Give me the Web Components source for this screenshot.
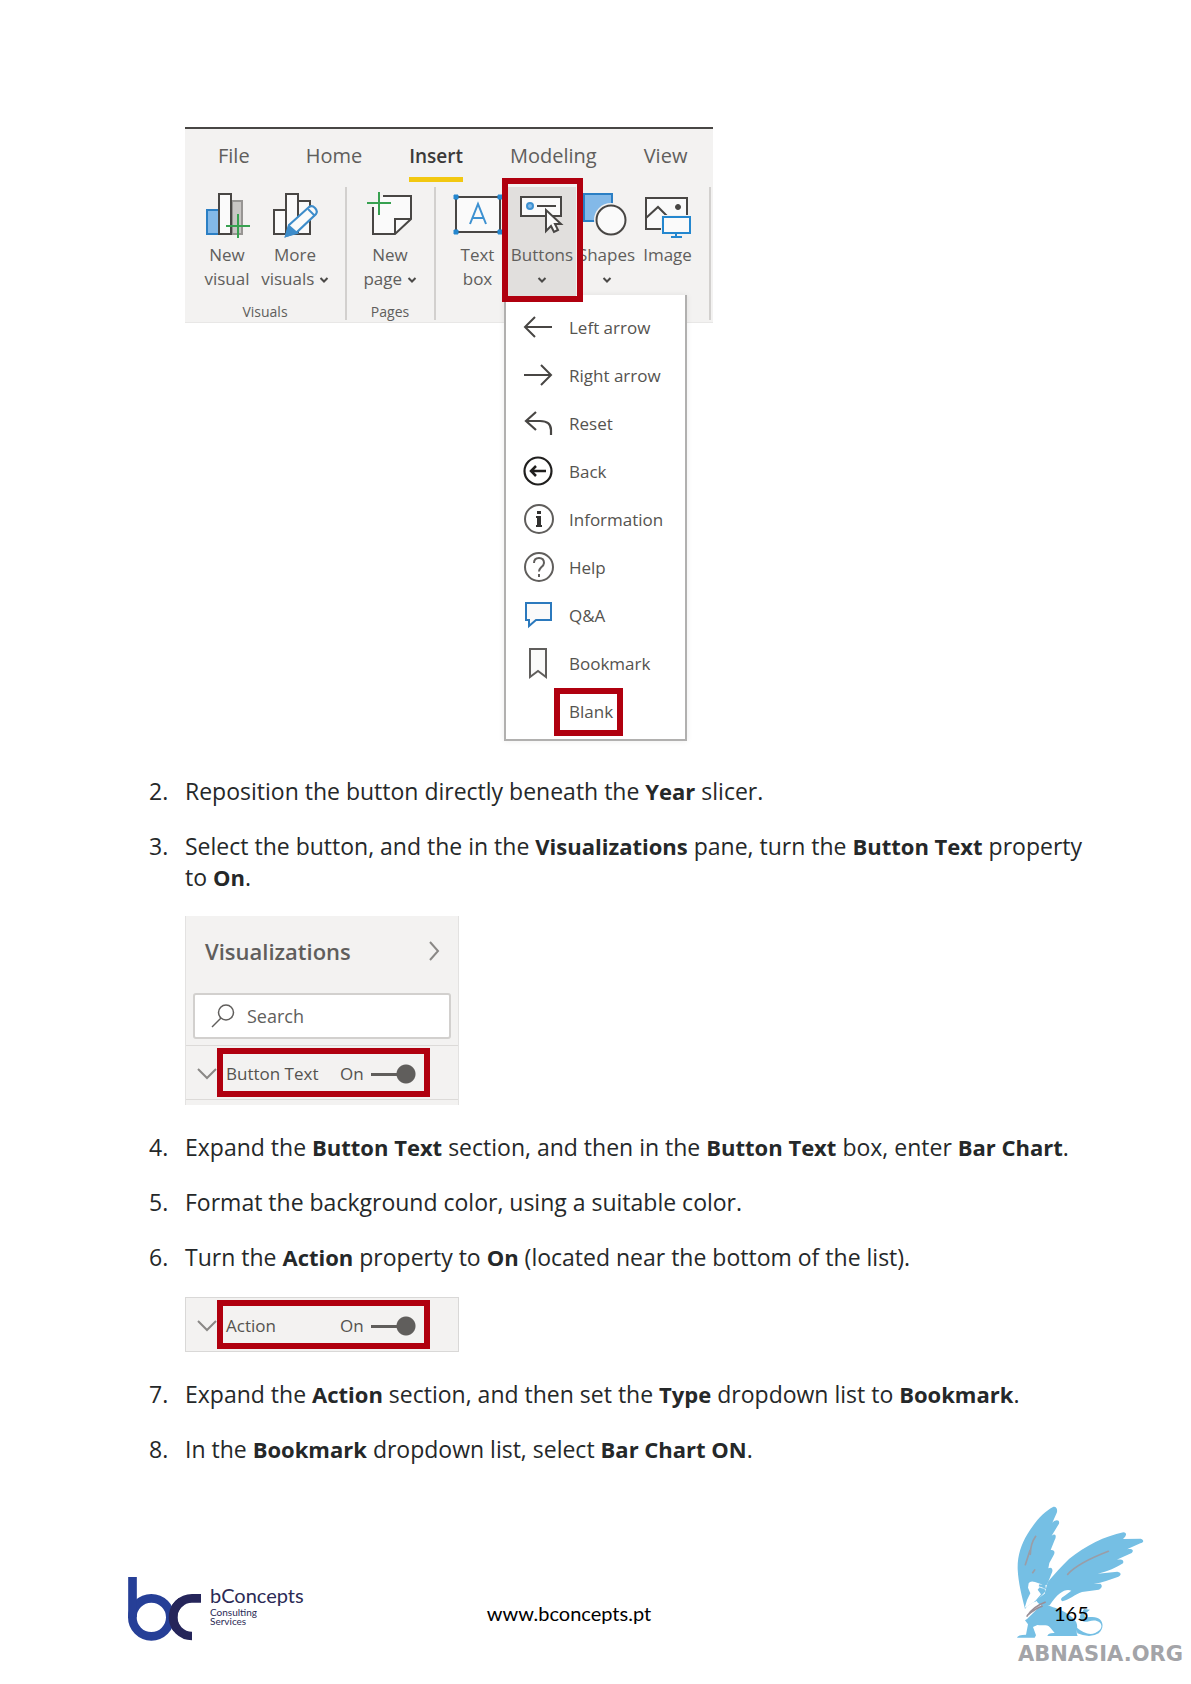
<!DOCTYPE html>
<html lang="en">
<head>
<meta charset="utf-8">
<meta name="viewport" content="width=device-width, initial-scale=1">
<title>Bookmark lab, page 165</title>
<style>
  body { margin: 0; background: #fff; color: #252829; font-family: "Open Sans", "Noto Sans", sans-serif; }
</style>
</head>
<body>
<lab-page></lab-page>

<script>
const define = (name, html) => {
  const template = document.createElement('template');
  template.innerHTML = html;
  customElements.define(name, class extends HTMLElement {
    constructor() {
      super();
      this.attachShadow({ mode: 'open' }).append(template.content.cloneNode(true));
    }
    connectedCallback() {
      this.shadowRoot.querySelectorAll('[data-from]').forEach(el => {
        el.textContent = this.getAttribute(el.dataset.from) || '';
      });
    }
  });
};

/* Numbered paragraph */
define('lab-step', `
<style>
  :host { display: grid; grid-template-columns: 36px 1fr; margin-bottom: 24px; font-size: 23px; line-height: 31px; }
  .body { min-width: 0; }
  ::slotted(b) { font-size: 22px; }
</style>
<span data-from="number"></span><div class="body"><slot></slot></div>`);

/* Ribbon tab */
define('ribbon-tab', `
<style>
  :host { display: block; }
  button { font: inherit; font-size: 20px; line-height: 28px; color: #605e5c; background: none; border: 0; padding: 13px 0 7px; border-bottom: 5px solid transparent; }
  :host([active]) button { font-size: 19px; font-weight: 600; color: #3b3a39; border-color: #f2c811; }
</style>
<button type="button"><slot></slot></button>`);

/* Ribbon command: icon over a label */
define('ribbon-command', `
<style>
  :host { display: block; flex: none; position: relative; }
  button { font: inherit; font-size: 17px; line-height: 24px; color: #605e5c; background: none; border: 0; padding: 5px 0 0; width: 100%; height: 112px; display: flex; flex-direction: column; align-items: center; white-space: nowrap; }
  ::slotted(svg) { display: block; margin-bottom: 5px; }
  :host([marked]) { z-index: 2; }
  :host([marked]) button { background: #e1dfdd; }
  :host([marked])::after { content: ""; position: absolute; inset: -9px -7px -3px -6px; border: 6px solid #b0000f; pointer-events: none; }
</style>
<button type="button"><slot name="icon"></slot><span><slot></slot></span></button>`);

define('ribbon-group', `
<style>
  :host { display: flex; flex-direction: column; box-sizing: border-box; border-right: 2px solid #d2d0ce; }
  .commands { display: flex; flex: 1; align-items: flex-start; }
  .title { font-size: 14px; line-height: 16px; text-align: center; color: #605e5c; }
</style>
<div class="commands"><slot></slot></div><div class="title" data-from="label"></div>`);

define('down-mark', `
<style>:host { display: inline-block; vertical-align: middle; } svg { display: block; }</style>
<svg width="10" height="8" viewBox="0 0 10 8" fill="none" stroke="#4b4a48" stroke-width="2"><path d="M1.500 2l3.500 3.500L8.500 2"/></svg>`);

/* Drop-down entry */
define('menu-entry', `
<style>
  :host { display: block; }
  button { font: inherit; font-size: 17px; line-height: 24px; color: #55534f; width: 100%; height: 48px; padding: 0 0 0 16px; background: none; border: 0; display: flex; align-items: center; gap: 15px; text-align: left; }
  .icon { flex: none; width: 32px; height: 36px; display: flex; align-items: center; justify-content: center; }
  .label { position: relative; }
  :host([marked]) .label::after { content: ""; position: absolute; inset: -12px -10px -12px -15px; border: 6px solid #b0000f; }
</style>
<button type="button" role="menuitem"><span class="icon"><slot name="icon"></slot></span><span class="label"><slot></slot></span></button>`);

define('buttons-menu', `
<style>
  :host { display: block; box-sizing: border-box; width: 183px; padding: 9px 0 3px; background: #fff; border: 2px solid #b1b0af; border-top: 0; box-shadow: 0 0 6px rgba(0,0,0,.08); }
</style>
<div role="menu" aria-label="Buttons">
<menu-entry><svg slot="icon" width="30" height="24" fill="none" stroke="#484644" stroke-width="2"><path d="M12 1L2 11l10 10M2 11h27"/></svg>Left arrow</menu-entry>
<menu-entry><svg slot="icon" width="30" height="24" fill="none" stroke="#484644" stroke-width="2"><path d="M18 1l10 10-10 10M28 11H1"/></svg>Right arrow</menu-entry>
<menu-entry><svg slot="icon" width="30" height="26" fill="none" stroke="#484644" stroke-width="2.200"><path d="M13 1L3 10l10 9M3 10h14q11 0 11 9v5"/></svg>Reset</menu-entry>
<menu-entry><svg slot="icon" width="30" height="32" fill="none" stroke="#201f1e" stroke-width="2.200"><circle cx="15" cy="15" r="13.500"/><path d="M13 10l-5 5 5 5M8 15h15" stroke-width="2.500"/></svg>Back</menu-entry>
<menu-entry><svg slot="icon" width="32" height="32" fill="none" stroke="#605e5c" stroke-width="2"><circle cx="17" cy="15" r="14"/><path d="M17 7v3M17 12v11" stroke="#323130" stroke-width="4"/><path d="M14 13h3M14 22h6" stroke="#323130" stroke-width="2"/></svg>Information</menu-entry>
<menu-entry><svg slot="icon" width="32" height="32" fill="none" stroke="#605e5c" stroke-width="2"><circle cx="17" cy="15" r="14"/><path d="M12 11q0-5 5-5t5 5q0 2-3 4.500-2 2-2 4M17 22v3"/></svg>Help</menu-entry>
<menu-entry><svg slot="icon" width="30" height="30" fill="#fafafa" stroke="#2b79bd" stroke-width="2"><path d="M3 2h25v17H13l-7 6v-6H3z"/></svg>Q&amp;A</menu-entry>
<menu-entry><svg slot="icon" width="22" height="32" fill="#fafafa" stroke="#605e5c" stroke-width="2"><path d="M3 1h16v28l-8-6-8 6z"/></svg>Bookmark</menu-entry>
<menu-entry marked>Blank</menu-entry>
</div>`);

define('ribbon-figure', `
<style>
  :host { display: block; position: relative; width: 528px; height: 615px; }
  .ribbon { box-sizing: border-box; height: 196px; background: #f3f2f1; border-top: 2px solid #484644; border-bottom: 1px solid #e8e7e6; }
  nav { display: flex; gap: 47px; padding: 0 0 0 33px; height: 58px; }
  nav ribbon-tab:first-child { margin-right: 9px; }
  .groups { display: flex; height: 133px; }
  .visuals { width: 162px; padding: 0 8px; }
  .pages { width: 89px; padding: 0 10px 0 9px; }
  .items { width: 275px; padding-left: 11px; }
  .wide { width: 68px; }
  .narrow { width: 61px; }
  buttons-menu { position: absolute; left: 319px; top: 168px; z-index: 1; }
</style>
<div class="ribbon">
<nav><ribbon-tab>File</ribbon-tab><ribbon-tab>Home</ribbon-tab><ribbon-tab active>Insert</ribbon-tab><ribbon-tab>Modeling</ribbon-tab><ribbon-tab>View</ribbon-tab></nav>
<div class="groups">
<ribbon-group class="visuals" label="Visuals">
  <ribbon-command class="wide"><svg slot="icon" width="46" height="46" fill="none" stroke-width="2"><path d="M28 9h10v33H28z" fill="#c8c6c4" stroke="#979593"/><path d="M3 18h12v24H3z" fill="#83b9e8" stroke="#2b7fc4"/><path d="M15 2h12v40H15z" fill="#fafafa" stroke="#484644"/><path d="M34 22v24M22 34h24" stroke="#37a150"/></svg>New<br>visual</ribbon-command>
  <ribbon-command class="wide"><svg slot="icon" width="46" height="46" fill="#fafafa" stroke="#484644" stroke-width="2"><path d="M2 18h12v24H2zM26 9h12v33H26zM14 2h12v40H14z"/><path d="M14 44l3-11L37 15q3-2 6 1t1 6L25 40z" stroke="#3d8cca" stroke-width="2.200"/><path d="M14 44l3-10 8 7z" fill="#3d8cca" stroke="#3d8cca"/><path d="M36 17l7 7" stroke="#3d8cca"/></svg>More<br>visuals <down-mark></down-mark></ribbon-command>
</ribbon-group>
<ribbon-group class="pages" label="Pages">
  <ribbon-command class="wide"><svg slot="icon" width="46" height="46" fill="none" stroke-width="2"><path d="M6 14V42H28L44 27V4H16" fill="#fafafa" stroke="none"/><path d="M16 4H44V27L28 42H6V15M28 42V27H44" stroke="#484644"/><path d="M12 0v23M0 11h24" stroke="#37a150"/></svg>New<br>page <down-mark></down-mark></ribbon-command>
</ribbon-group>
<ribbon-group class="items">
  <ribbon-command class="narrow"><svg slot="icon" width="50" height="46" fill="none" stroke="#3d91d1" stroke-width="2"><path d="M3 5h44v35H3z" fill="#fafafa" stroke="#484644"/><path d="M17 32l8-20 8 20M20 26h10"/><path d="M1 3h4v4H1zM45 3h4v4h-4zM1 38h4v4H1zM45 38h4v4h-4z" fill="#2487cf" stroke="#2487cf" stroke-width="1"/></svg>Text<br>box</ribbon-command>
  <ribbon-command class="wide" marked><svg slot="icon" width="46" height="46" fill="none" stroke="#484644" stroke-width="2"><path d="M2 5h40v19H2z" fill="#fafafa"/><circle cx="11" cy="14" r="3" fill="#83b9e8" stroke="#3d91d1"/><path d="M18 14h19"/><path d="M27 18v21l5-5 3 6 4-2-3-6h6z" fill="#fafafa"/></svg>Buttons<br><down-mark></down-mark></ribbon-command>
  <ribbon-command class="narrow"><svg slot="icon" width="48" height="46" fill="#83b9e8" stroke="#2b7fc4" stroke-width="2"><path d="M1 2h28v27H1z"/><circle cx="28" cy="28" r="17" fill="#f3f2f1" stroke="none"/><circle cx="28" cy="28" r="14.500" fill="#fafafa" stroke="#484644"/></svg>Shapes<br><down-mark></down-mark></ribbon-command>
  <ribbon-command class="narrow"><svg slot="icon" width="48" height="46" fill="none" stroke="#484644" stroke-width="2"><path d="M2 6h41v31H2z" fill="#fafafa"/><path d="M2 26l12-11 10 10"/><circle cx="34" cy="15" r="2.500" fill="#484644" stroke-width="1"/><path d="M17 23h29v19H17z" fill="#f3f2f1" stroke="none"/><path d="M19 25h27v16H19zM32 41v4M27 45h11" fill="#fafafa" stroke="#2487cf"/></svg>Image</ribbon-command>
</ribbon-group>
</div>
</div>
<buttons-menu></buttons-menu>`);

/* Property row with an on/off switch */
define('property-row', `
<style>
  :host { display: block; }
  .row { display: flex; align-items: center; height: 53px; padding-left: 11px; }
  .chevron { flex: none; }
  .mark { box-sizing: border-box; display: flex; align-items: center; width: 213px; height: 49px; border: 6px solid #b0000f; padding: 2px 0 0 3px; font-size: 17px; line-height: 24px; color: #55534f; }
  .name { flex: none; width: 114px; white-space: nowrap; }
  .state { flex: none; width: 31px; }
  input { appearance: none; flex: none; margin: 0; width: 46px; height: 20px; background: radial-gradient(circle at 35px 10px, #605e5c 9px, transparent 10px), linear-gradient(#605e5c, #605e5c) 0 9px / 30px 3px no-repeat; }
</style>
<div class="row">
<svg class="chevron" width="20" height="20" fill="none" stroke="#8a8886" stroke-width="2"><path d="M1 6l9 9 9-9"/></svg>
<div class="mark"><label class="name" for="toggle" data-from="name"></label><span class="state">On</span><input id="toggle" type="checkbox" role="switch" checked></div>
</div>`);

define('visualizations-pane', `
<style>
  :host { display: block; box-sizing: border-box; width: 274px; height: 189px; margin: 23px 0 3px; background: #f3f2f1; border: solid #e3e2e1; border-width: 0 1px; }
  header { display: flex; justify-content: space-between; align-items: center; height: 70px; padding: 0 18px 0 19px; }
  h2 { margin: 0; font-size: 22px; line-height: 28px; font-weight: 600; color: #605e5c; }
  header button { border: 0; background: none; padding: 0; display: flex; }
  .search { display: flex; align-items: center; gap: 12px; box-sizing: border-box; height: 46px; margin: 7px 7px 6px; padding-left: 16px; background: #fff; border: 2px solid #d2d0ce; border-radius: 3px; }
  input { font: inherit; font-size: 18px; line-height: 24px; border: 0; padding: 0; min-width: 0; width: 180px; outline: 0; background: none; }
  input::placeholder { color: #605e5c; opacity: 1; }
  .line { border-top: 1px solid #dcdad8; border-bottom: 1px solid #dcdad8; }
</style>
<header><h2>Visualizations</h2><button type="button" aria-label="Collapse pane"><svg width="12" height="20" fill="none" stroke="#8a8886" stroke-width="2"><path d="M2 1l8 9-8 9"/></svg></button></header>
<label class="search"><svg width="24" height="24" fill="none" stroke="#605e5c" stroke-width="1.500"><circle cx="15" cy="8.500" r="7.500"/><path d="M10 14L1 23"/></svg><input type="text" placeholder="Search" aria-label="Search"></label>
<div class="line"><property-row name="Button Text"></property-row></div>`);

define('action-pane', `
<style>
  :host { display: block; box-sizing: border-box; width: 274px; margin: 24px 0 3px; background: #f3f2f1; border: 1px solid #d9d8d7; }
</style>
<property-row name="Action"></property-row>`);

define('concepts-logo', `
<style>
  :host { display: flex; gap: 9px; align-items: flex-start; color: #2b2a55; font-family: Lato, sans-serif; }
  svg { flex: none; }
  .name { font-size: 20px; line-height: 26px; margin-top: 5px; }
  .sub { font-size: 10px; line-height: 9px; }
</style>
<svg width="73" height="64" viewBox="53 53 219 192" fill="none" stroke-width="26"><path d="M272 117H245a56 56 0 0 0 0 113" stroke="#25255a"/><circle cx="123" cy="174" r="57" stroke="#263f97"/><path d="M66.500 53V174" stroke="#263f97"/><path d="M213 127A56 56 0 0 0 200 208" stroke="#25255a"/></svg>
<div><div class="name">bConcepts</div><div class="sub">Consulting</div><div class="sub">Services</div></div>`);

define('griffin-mark', `
<style>
  :host { display: block; position: relative; width: 174px; }
  svg { display: block; }
  .number { position: absolute; left: 37px; top: 95px; font: 20px/24px Lato, sans-serif; color: #000; }
  .brand { font: 900 21px/16px "DejaVu Sans", sans-serif; color: #a3a4a8; margin: 8px 0 0 1px; }
</style>
<svg width="130" height="132" viewBox="51 48 390 396" fill="#75bfe4">
<path d="M75 357C66 320 55 280 53 238C52 198 63 165 82 133C103 98 130 66 159 51C169 48 174 59 170 69L157 98C169 86 180 90 177 101L155 137C166 128 171 137 164 150L152 180C163 178 167 187 160 197L148 219L145 235C155 229 161 239 155 250L146 272L140 285C128 285 133 296 137 304L127 314C113 326 116 334 99 337L81 349Z"/>
<path d="M143 276C165 252 183 230 207 207C256 168 315 138 370 127C382 128 380 138 369 147L422 146C434 150 431 158 421 160L381 178C397 175 403 181 395 189L350 209C366 206 373 211 369 220C350 232 323 245 293 251L352 245C366 248 364 257 353 261C330 269 307 279 281 281L301 281C309 287 305 295 296 299L246 306C224 313 209 329 187 334C179 329 185 323 192 319L214 302C199 295 176 304 149 346C131 352 117 347 108 330L134 311Z"/>
<path d="M86 280Q91 271 105 276Q125 281 138 291Q133 300 119 292L113 299L123 313L105 334L74 354Q80 328 91 310L84 293Z" fill="#fff"/>
<path d="M118 283l18 3 2 12-9-5-13-4z"/>
<path d="M81 387L129 340L159 352C181 358 208 371 225 391C239 410 225 424 233 438H142Q144 428 164 429L151 413C141 402 128 408 112 405L99 411L108 436L104 443H51Q53 434 78 434L84 403L75 391Z"/>
<path d="M229 412Q270 447 298 421C316 402 292 384 267 394C244 401 232 383 246 367L252 357L270 359L257 370C248 383 260 382 274 381C311 379 316 412 296 430Q270 446 232 430Z"/>
<path d="M107 139Q91 162 91 193M90 181L76 224M104 240L98 248M203 253Q234 219 325 184" fill="none" stroke="#9a9da7" stroke-width="5" stroke-linecap="round"/>
<path d="M80 380Q98 350 137 336M82 376Q105 356 128 348" fill="none" stroke="#9a8f97" stroke-width="5"/>
</svg>
<span class="number">165</span>
<div class="brand">ABNASIA.ORG</div>`);

define('page-footer', `
<style>
  :host { display: flex; align-items: flex-start; padding-left: 128px; margin-top: 41px; }
  .row { flex: 1; display: grid; grid-template-columns: 1fr auto 1fr; padding: 71px 7px 0 0; }
  .site { font: 20px/24px Lato, sans-serif; color: #000; margin-top: 24px; text-decoration: none; }
</style>
<div class="row"><concepts-logo></concepts-logo><a class="site" href="#">www.bconcepts.pt</a></div>
<griffin-mark></griffin-mark>`);

define('lab-page', `
<style>
  :host { display: block; }
  main { padding: 127px 96px 0 149px; }
  .lead { padding: 0 0 34px 36px; }
</style>
<main>
<div class="lead"><ribbon-figure></ribbon-figure></div>
<lab-step number="2.">Reposition the button directly beneath the <b>Year</b> slicer.</lab-step>
<lab-step number="3.">Select the button, and the in the <b>Visualizations</b> pane, turn the <b>Button Text</b> property to <b>On</b>.<visualizations-pane></visualizations-pane></lab-step>
<lab-step number="4.">Expand the <b>Button Text</b> section, and then in the <b>Button Text</b> box, enter <b>Bar Chart</b>.</lab-step>
<lab-step number="5.">Format the background color, using a suitable color.</lab-step>
<lab-step number="6.">Turn the <b>Action</b> property to <b>On</b> (located near the bottom of the list).<action-pane></action-pane></lab-step>
<lab-step number="7.">Expand the <b>Action</b> section, and then set the <b>Type</b> dropdown list to <b>Bookmark</b>.</lab-step>
<lab-step number="8.">In the <b>Bookmark</b> dropdown list, select <b>Bar Chart ON</b>.</lab-step>
</main>
<page-footer></page-footer>`);
</script>
</body>
</html>
